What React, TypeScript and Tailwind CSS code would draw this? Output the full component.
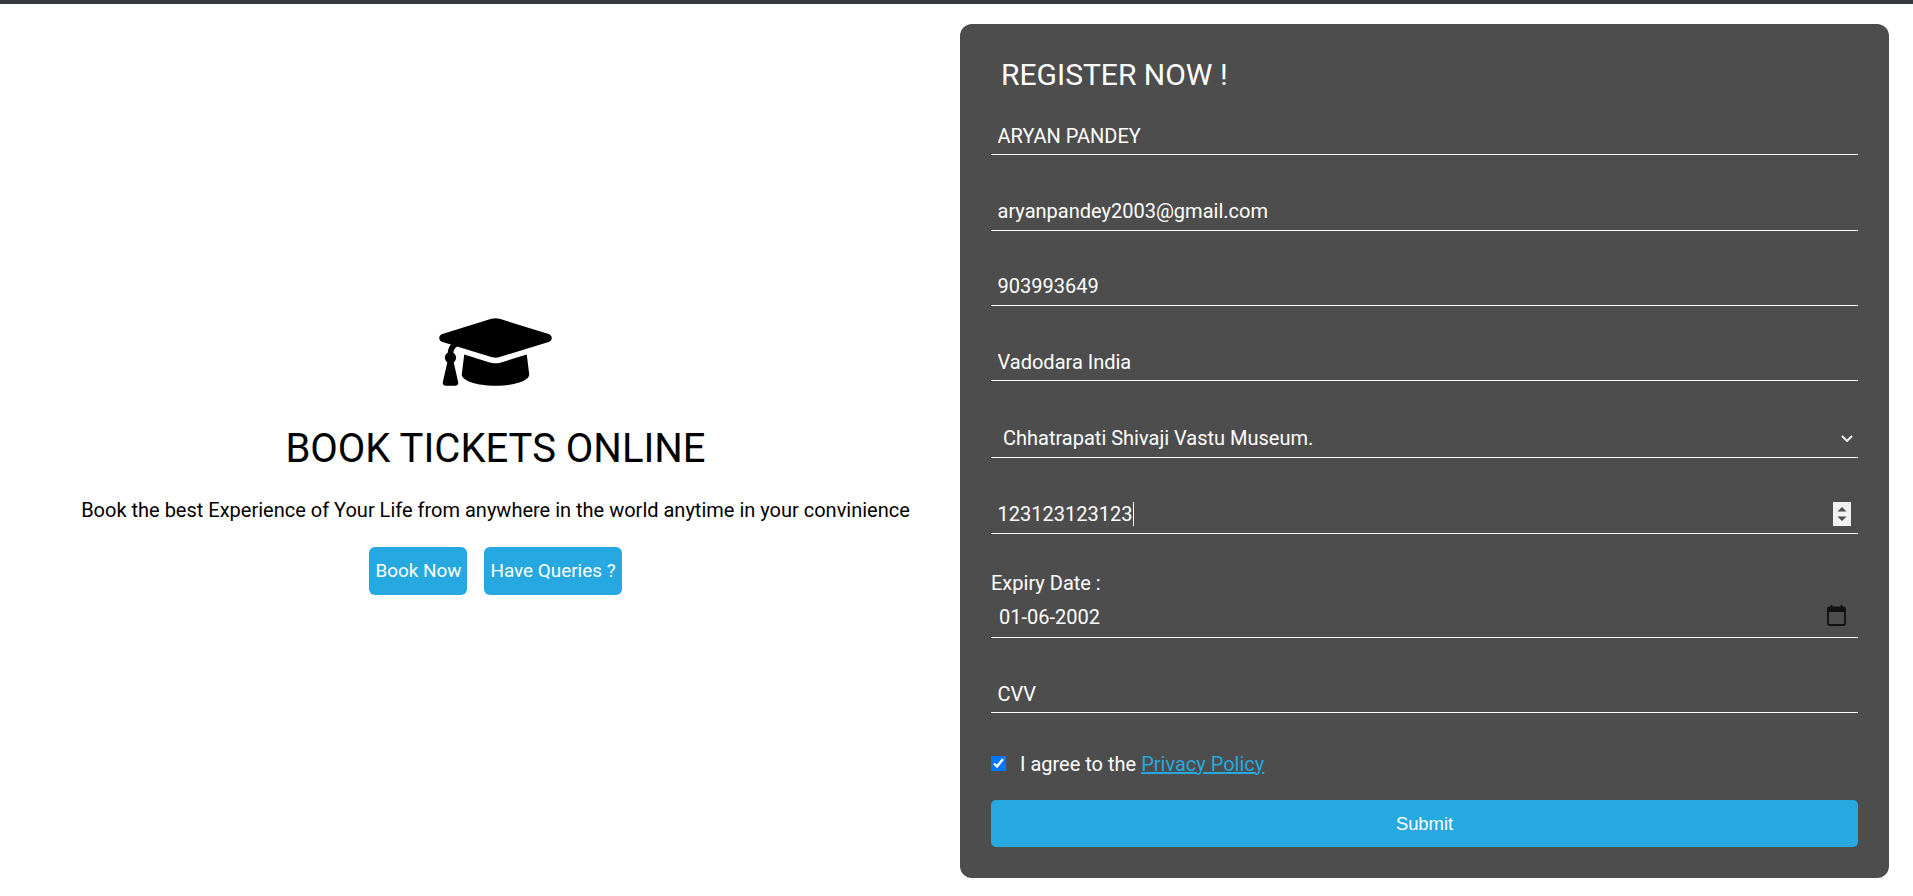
import { FaGraduationCap } from "react-icons/fa";

const base =
  "block w-full h-[38px] bg-transparent border-0 border-b border-white pl-[6.5px] pr-[6px] text-[20px] text-white outline-none";
const field = base + " mb-[37.4px]";

export default function App() {
  return (
    <div className="min-h-[896px] bg-white font-['Roboto',sans-serif]">
      <div className="h-1 bg-[#36393d]" />
      <div className="flex items-center pt-5 pl-[31px] pr-6">
        <div className="w-[929px] flex flex-col items-center text-center text-black">
          <FaGraduationCap className="w-[113px] h-[90px]" />
          <h1 className="mt-[28px] text-[40px] leading-[48px] font-normal">BOOK TICKETS ONLINE</h1>
          <p className="mt-[22px] text-[20px] leading-[30px]">
            Book the best Experience of Your Life from anywhere in the world anytime in your convinience
          </p>
          <div className="mt-[22px] mb-px flex gap-[17px]">
            <button className="h-12 pt-px px-[6px] rounded-[6px] bg-[#25a9e0] text-white text-[18.9px]">Book Now</button>
            <button className="h-12 pt-px px-[6px] rounded-[6px] bg-[#25a9e0] text-white text-[18.9px]">Have Queries ?</button>
          </div>
        </div>
        <form className="w-[929px] h-[854px] bg-[#4d4d4d] rounded-[12px] px-[31px] text-white shrink-0">
          <h3 className="pt-[26px] pb-[17.2px] pl-[10px] text-[30px] leading-[50px] font-normal">REGISTER NOW !</h3>
          <input className={field} defaultValue="ARYAN PANDEY" />
          <input className={field} defaultValue="aryanpandey2003@gmail.com" />
          <input className={field} defaultValue="903993649" />
          <input className={base + " mb-[38.2px]"} defaultValue="Vadodara India" />
          <div className="relative mb-[38.3px]">
            <select className={base + " appearance-none pl-[12px]"} defaultValue="m">
              <option value="m" className="text-black">Chhatrapati Shivaji Vastu Museum.</option>
            </select>
            <svg viewBox="0 0 12 7" className="absolute right-[5px] top-[15px] w-[12px] h-[7px] pointer-events-none" fill="none">
              <path d="M1 1l5 5 5-5" stroke="#f2f2f2" strokeWidth="1.9" />
            </svg>
          </div>
          <div className="relative mb-[37.4px]">
            <input
              type="number"
              className={base + " [&::-webkit-inner-spin-button]:appearance-none"}
              defaultValue="123123123123"
            />
            <span className="absolute left-[142px] top-[6px] h-[24px] w-px bg-white" />
            <svg viewBox="0 0 18 24" className="absolute right-[7px] top-[6px] w-[18px] h-[24px] bg-[#f1f1f1]">
              <path d="M9 5l4.5 4.5h-9zM9 19l4.5-4.5h-9z" fill="#4d4d4d" />
            </svg>
          </div>
          <label className="block h-[29px] text-[20px] leading-[24px]">Expiry Date :</label>
          <div className="relative mb-[36.4px]">
            <input className={base + " pl-[8px] pb-[4px]"} defaultValue="01-06-2002" />
            <svg viewBox="0 0 19 21" className="absolute right-[12px] top-[5px] w-[19px] h-[21px]" fill="none">
              <rect x="1" y="2.5" width="17" height="17.5" rx="1.5" stroke="#111" strokeWidth="1.8" />
              <path d="M1 2h17v5H1z" fill="#111" />
              <path d="M4.5 0v2.5M14.5 0v2.5" stroke="#111" strokeWidth="1.8" />
            </svg>
          </div>
          <input className={base + " mb-[41px] pt-[2px]"} defaultValue="CVV" />
          <div className="flex items-center h-[20px] text-[20px]">
            <input type="checkbox" defaultChecked className="w-[15px] h-[15px] m-0" />
            <span className="ml-[14px]">
              I agree to the <a href="#" className="text-[#25a9e0] underline">Privacy Policy</a>
            </span>
          </div>
          <button type="button" className="block w-full h-[47px] mt-[26.5px] rounded-[5px] bg-[#25a9e0] text-white text-[18.4px] font-['Liberation_Sans',sans-serif]">
            Submit
          </button>
        </form>
      </div>
    </div>
  );
}
